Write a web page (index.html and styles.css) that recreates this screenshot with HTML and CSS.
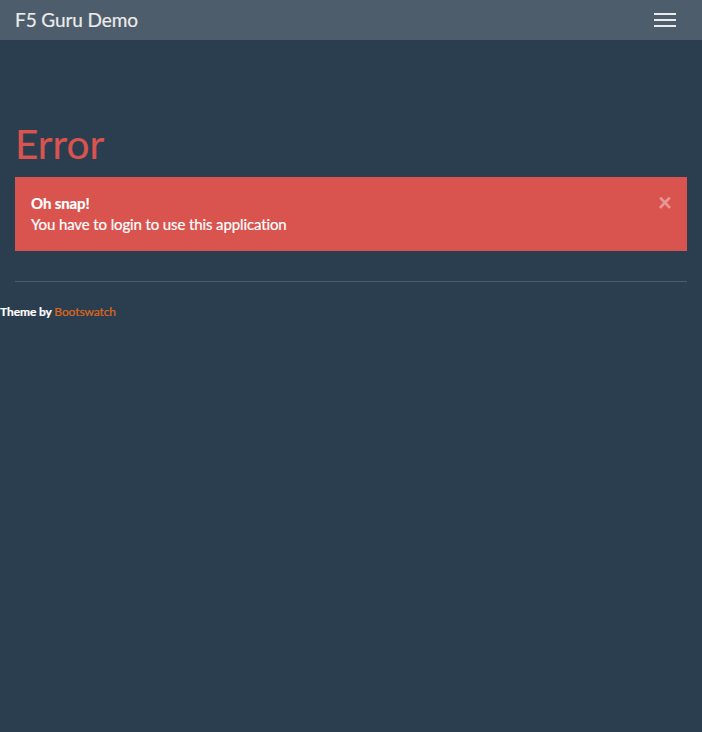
FILE: index.html
```html
<!DOCTYPE html>
<html lang="en">
<head>
<meta charset="utf-8">
<title>F5 Guru Demo</title>
<link rel="stylesheet" href="styles.css">
</head>
<body>
<nav class="navbar">
  <a class="brand" href="#">F5 Guru Demo</a>
  <button class="toggle" type="button" aria-label="Toggle navigation">
    <span class="bar"></span><span class="bar"></span><span class="bar"></span>
  </button>
</nav>
<main class="container">
  <h1 class="title">Error</h1>
  <div class="alert">
    <button class="close" type="button" aria-label="Close">&times;</button>
    <strong>Oh snap!</strong><br>
    You have to login to use this application
  </div>
  <hr class="rule">
</main>
<footer class="footer">
  <p class="credit">Theme by <a class="credit-link" href="#">Bootswatch</a></p>
</footer>
</body>
</html>
```
FILE: styles.css
```css
html, body {
  margin: 0;
  padding: 0;
  height: 100%;
}
body {
  background: #2b3e50;
  color: #ebebeb;
  font-family: Lato, "Open Sans", "Liberation Sans", sans-serif;
  font-size: 15px;
  line-height: 1.42857;
  -webkit-text-stroke: 0.2px currentColor;
}
.navbar {
  height: 40px;
  background: #4e5d6c;
  display: flex;
  align-items: center;
  justify-content: space-between;
  padding: 0 15px;
}
.brand {
  color: #ebebeb;
  text-decoration: none;
  font-size: 19px;
  line-height: 40px;
  letter-spacing: -0.1px;
}
.toggle {
  background: none;
  border: 0;
  padding: 0;
  margin-right: 11px;
  width: 22px;
  display: flex;
  flex-direction: column;
  gap: 4px;
  cursor: pointer;
}
.bar {
  display: block;
  width: 22px;
  height: 2px;
  background: #ebebeb;
}
.container {
  padding: 82px 15px 0;
}
.title {
  margin: 0 0 10px;
  color: #d9534f;
  font-size: 40.5px;
  font-weight: 400;
  line-height: 1.1;
}
.alert {
  position: relative;
  background: #d9534f;
  color: #fff;
  border: 1px solid transparent;
  padding: 15px 35px 15px 15px;
  letter-spacing: -0.12px;
}
.alert strong {
  font-weight: 700;
}
.close {
  position: absolute;
  top: 12px;
  right: 14px;
  background: none;
  border: 0;
  padding: 0;
  color: #fff;
  opacity: 0.4;
  font-family: inherit;
  font-size: 24px;
  font-weight: 700;
  line-height: 1;
  cursor: pointer;
}
.rule {
  margin: 30px 0 0;
  border: 0;
  border-top: 1px solid #4e5d6c;
}
.footer {
  padding-top: 21px;
}
.credit {
  margin: 0;
  font-size: 12px;
  font-weight: 700;
  color: #fff;
  letter-spacing: -0.1px;
}
.credit-link {
  color: #df691a;
  text-decoration: none;
  font-weight: 400;
}
```
